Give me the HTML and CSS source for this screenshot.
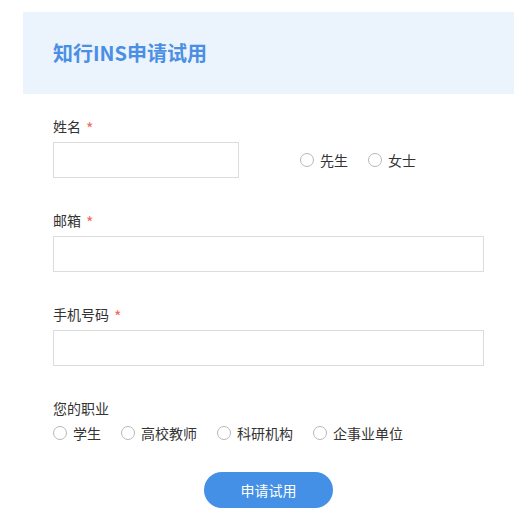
FILE: index.html
```html
<!DOCTYPE html>
<html>
<head>
    <meta charset="utf-8">
    <title>知行INS申请试用</title>
    <link rel="stylesheet" href="styles.css">
</head>
<body>
    <div class="page">
        <div class="banner">
            <h2>知行INS申请试用</h2>
        </div>

        <form class="trial-form" onsubmit="return false;">
            <div class="field">
                <label class="field-label" for="name">姓名<span class="req">*</span></label>
                <div class="name-row">
                    <input type="text" id="name" class="text-input name-input">
                    <div class="radio-group gender">
                        <label class="radio"><input type="radio" name="gender"><span>先生</span></label>
                        <label class="radio"><input type="radio" name="gender"><span>女士</span></label>
                    </div>
                </div>
            </div>

            <div class="field">
                <label class="field-label" for="email">邮箱<span class="req">*</span></label>
                <input type="text" id="email" class="text-input">
            </div>

            <div class="field">
                <label class="field-label" for="phone">手机号码<span class="req">*</span></label>
                <input type="text" id="phone" class="text-input">
            </div>

            <div class="field job">
                <div class="field-label">您的职业</div>
                <div class="radio-group">
                    <label class="radio"><input type="radio" name="job"><span>学生</span></label>
                    <label class="radio"><input type="radio" name="job"><span>高校教师</span></label>
                    <label class="radio"><input type="radio" name="job"><span>科研机构</span></label>
                    <label class="radio"><input type="radio" name="job"><span>企事业单位</span></label>
                </div>
            </div>

            <div class="actions">
                <button type="submit" class="submit-btn">申请试用</button>
            </div>
        </form>
    </div>
</body>
</html>
```

FILE: styles.css
```css
body {
    margin: 0;
    font-family: "Noto Sans CJK SC", "Noto Sans", sans-serif;
    font-size: 14px;
    color: #333;
    background-color: white;
}

.page {
    margin: 12px 16px 0 23px;
}

.banner {
    height: 82px;
    padding-left: 30px;
    display: flex;
    align-items: center;
    background-color: #ebf3fd;
}

.banner h2 {
    margin: 0;
    font-size: 20px;
    font-weight: bold;
    color: #4a8fe4;
    line-height: 24px;
}

.trial-form {
    padding: 22px 30px 0;
}

.field {
    margin-bottom: 32px;
}

.field.job {
    margin-bottom: 29px;
}

.field-label {
    display: block;
    line-height: 20px;
    margin-bottom: 6px;
}

.job .field-label {
    margin-bottom: 5px;
}

.req {
    color: #f26a60;
    margin-left: 5px;
    font-size: 16px;
    line-height: 1;
    vertical-align: -3px;
}

.text-input {
    display: block;
    width: 100%;
    height: 36px;
    border: 1px solid #dcdcdc;
    box-sizing: border-box;  /* Include border in size */
    padding: 0 10px;
    font: inherit;
    outline: none;
}

.name-row {
    display: flex;
    align-items: center;
}

.text-input.name-input {
    width: 186px;
}

.gender {
    margin-left: 61px;
}

.radio-group {
    display: flex;
    gap: 20px;
    line-height: 20px;
}

.radio {
    display: flex;
    align-items: center;
    cursor: pointer;
}

.radio input {
    appearance: none;
    -webkit-appearance: none;
    width: 14px;
    height: 14px;
    margin: 0 6px 0 0;
    border: 1px solid #b8b8b8;
    border-radius: 50%;
    box-sizing: border-box;
    background-color: white;
}

.radio input:checked {
    border-color: #4390e6;
    box-shadow: inset 0 0 0 3px white;
    background-color: #4390e6;
}

.actions {
    display: flex;
    justify-content: center;
}

.submit-btn {
    width: 129px;
    height: 36px;
    border: none;
    border-radius: 18px;
    background-color: #4390e6;
    color: white;
    font: inherit;
    cursor: pointer;
}

.submit-btn:hover {
    background-color: #3a84d6;
}
```
